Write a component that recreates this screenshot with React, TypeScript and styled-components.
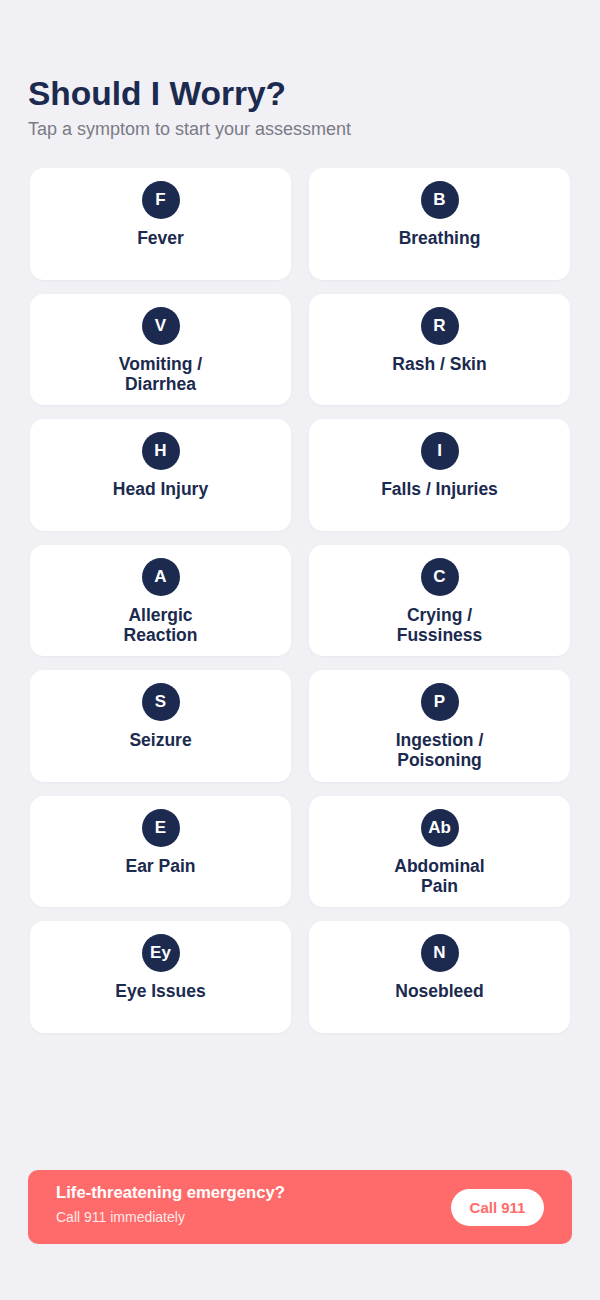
import React from "react";
import styled, { createGlobalStyle } from "styled-components";

const GlobalStyle = createGlobalStyle`
  html, body { margin: 0; padding: 0; background: #f0f0f5; }
  body { font-family: "Liberation Sans", Arial, sans-serif; }
  * { box-sizing: border-box; }
`;

const Page = styled.div`
  min-height: 100vh;
  display: flex;
  flex-direction: column;
  padding: 73px 28px 56px;
`;

const Title = styled.h1`
  margin: 0;
  font-size: 33.5px;
  line-height: 41px;
  font-weight: 700;
  color: #1b2a4e;
`;

const Subtitle = styled.p`
  margin: 5px 0 0;
  font-size: 18px;
  line-height: 21px;
  color: #7b7b85;
`;

const Grid = styled.div`
  display: grid;
  grid-template-columns: 1fr 1fr;
  column-gap: 18px;
  row-gap: 14px;
  margin: 28px 2px 0;
`;

const Card = styled.button`
  height: 111.5px;
  background: #ffffff;
  border: none;
  border-radius: 14px;
  box-shadow: 0 1px 3px rgba(27, 42, 78, 0.04);
  display: flex;
  flex-direction: column;
  align-items: center;
  justify-content: flex-start;
  padding: 13px 12px 0;
  font-family: inherit;
  cursor: pointer;
`;

const Badge = styled.div`
  width: 38px;
  height: 38px;
  border-radius: 50%;
  background: #1c2a4f;
  color: #ffffff;
  display: flex;
  align-items: center;
  justify-content: center;
  font-size: 17px;
  font-weight: 700;
  margin-bottom: 9px;
`;

const Label = styled.span`
  font-size: 17.5px;
  line-height: 20px;
  font-weight: 700;
  color: #1b2a4e;
  text-align: center;
  max-width: 126px;
`;

const Banner = styled.div`
  margin-top: auto;
  height: 74px;
  border-radius: 10px;
  background: #ff6b6b;
  display: flex;
  align-items: center;
  justify-content: space-between;
  padding: 0 28px;
`;

const BannerText = styled.div`
  display: flex;
  flex-direction: column;
  gap: 6px;
  padding-bottom: 5px;
`;

const BannerTitle = styled.span`
  font-size: 16.7px;
  line-height: 20px;
  font-weight: 700;
  color: #ffffff;
`;

const BannerSub = styled.span`
  font-size: 14px;
  line-height: 17px;
  color: rgba(255, 255, 255, 0.88);
`;

const CallButton = styled.button`
  width: 93px;
  height: 37px;
  border-radius: 19px;
  border: none;
  background: #ffffff;
  color: #ff6b6b;
  font-family: inherit;
  font-size: 15px;
  font-weight: 700;
  cursor: pointer;
`;

const symptoms: { badge: string; label: string }[] = [
  { badge: "F", label: "Fever" },
  { badge: "B", label: "Breathing" },
  { badge: "V", label: "Vomiting / Diarrhea" },
  { badge: "R", label: "Rash / Skin" },
  { badge: "H", label: "Head Injury" },
  { badge: "I", label: "Falls / Injuries" },
  { badge: "A", label: "Allergic Reaction" },
  { badge: "C", label: "Crying / Fussiness" },
  { badge: "S", label: "Seizure" },
  { badge: "P", label: "Ingestion / Poisoning" },
  { badge: "E", label: "Ear Pain" },
  { badge: "Ab", label: "Abdominal Pain" },
  { badge: "Ey", label: "Eye Issues" },
  { badge: "N", label: "Nosebleed" },
];

export default function App() {
  return (
    <>
      <GlobalStyle />
      <Page>
        <Title>Should I Worry?</Title>
        <Subtitle>Tap a symptom to start your assessment</Subtitle>
        <Grid>
          {symptoms.map((s) => (
            <Card key={s.label}>
              <Badge>{s.badge}</Badge>
              <Label>{s.label}</Label>
            </Card>
          ))}
        </Grid>
        <Banner>
          <BannerText>
            <BannerTitle>Life-threatening emergency?</BannerTitle>
            <BannerSub>Call 911 immediately</BannerSub>
          </BannerText>
          <CallButton>Call 911</CallButton>
        </Banner>
      </Page>
    </>
  );
}
